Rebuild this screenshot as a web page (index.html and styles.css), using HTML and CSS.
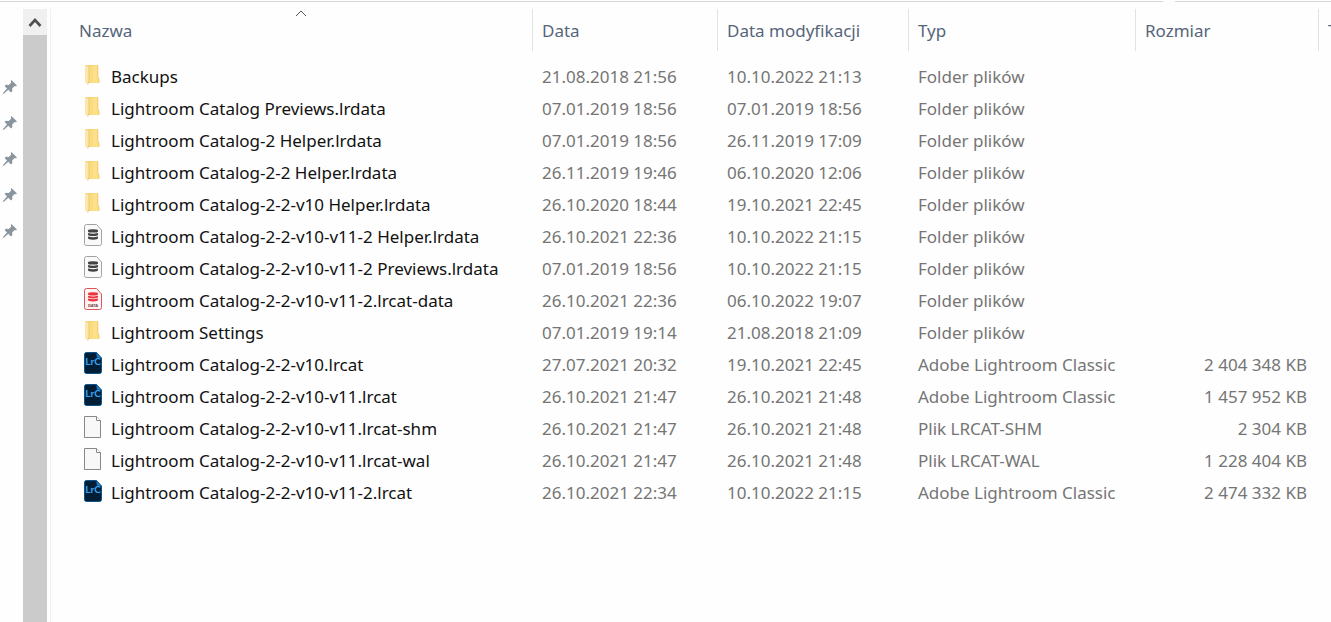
FILE: index.html
```html
<!DOCTYPE html>
<html lang="pl">
<head>
    <meta charset="UTF-8">
    <meta name="viewport" content="width=device-width, initial-scale=1.0">
    <title>Lightroom</title>
    <link rel="stylesheet" href="styles.css">
</head>
<body>

    <!-- Icons used in the lists -->
    <svg class="sprite" aria-hidden="true">
        <symbol id="pin" viewBox="0 0 16 16">
            <path d="M9.4 1 15 6.4 13.8 7.3 12.6 7.1 10.2 9.6 10.3 12.3 9 13.4 6.3 10.7 1.6 15 .8 14.3 5 9.5 2.6 7 3.8 5.8 6.8 6 9.2 3.6 8.7 2.1Z" fill="#8b959f"/>
        </symbol>
        <symbol id="folder" viewBox="0 0 18 22">
            <path d="M1 1H14V13.5L15 14.5V19H5L1 18Z" fill="#f2d27c"/>
            <path d="M5 3 10 1.5H14V13.5L15 14.5V19H5Z" fill="#fadb7e"/>
            <path d="M9 1.5H13.5V18.5H9Z" fill="#fde08b"/>
            <path d="M5 3 1 1V18L3.8 20.5 5 19Z" fill="#fbe7ae"/>
            <path d="M5 3V17L3.8 20.5" fill="none" stroke="#e9c566" stroke-width=".8"/>
            <path d="M13.8 1V13.5L15 14.5V19" fill="none" stroke="#ecc75f" stroke-width=".8"/>
        </symbol>
        <symbol id="database" viewBox="0 0 18 22">
            <path d="M2.5.5H12.5L17.5 6V19.5Q17.5 21.5 15.5 21.5H2.5Q.5 21.5.5 19.5V2.5Q.5.5 2.5.5Z" fill="#f9f9f9" stroke="#a2a2a2"/>
            <path d="M4 6.6Q4 5.2 9 5.2T14 6.6V7.4Q14 8.6 9 8.6T4 7.4ZM4 9Q9 10.6 14 9V10.7Q14 12.1 9 12.1T4 10.7ZM4 12.4Q9 14 14 12.4V14Q14 15.7 9 15.7T4 14Z" fill="#444"/>
        </symbol>
        <symbol id="data" viewBox="0 0 18 22">
            <path d="M2.5.5H12.5L17.5 6V19.5Q17.5 21.5 15.5 21.5H2.5Q.5 21.5.5 19.5V2.5Q.5.5 2.5.5Z" fill="#fff3f3" stroke="#d9545b"/>
            <path d="M4 5.6Q4 4.2 9 4.2T14 5.6V6.3Q14 7.5 9 7.5T4 6.3ZM4 7.7Q9 9.2 14 7.7V9.1Q14 10.4 9 10.4T4 9.1ZM4 10.6Q9 12.1 14 10.6V12Q14 13.4 9 13.4T4 12Z" fill="#ed343b"/>
            <text x="9" y="19" text-anchor="middle" font-size="4" font-weight="700" fill="#6b4446">DATA</text>
        </symbol>
        <symbol id="lrc" viewBox="0 0 18 22">
            <path d="M2.5.5H12.5L17.5 6V19.5Q17.5 21.5 15.5 21.5H2.5Q.5 21.5.5 19.5V2.5Q.5.5 2.5.5Z" fill="#001e36" stroke="#08548c"/>
            <path d="M12.5.5 17.5 6H14.5Q12.5 6 12.5 4Z" fill="#1b78b8"/>
            <text x="9" y="13" text-anchor="middle" font-family="Lato, sans-serif" font-size="10" font-weight="700" fill="#3ba4f2">LrC</text>
        </symbol>
        <symbol id="file" viewBox="0 0 18 22">
            <path d="M.5.5H12.5L16.5 4.5V21.5H.5Z" fill="#f8f8f8" stroke="#888"/>
            <path d="M12.5.5V4.5H16.5" fill="#fff" stroke="#888"/>
        </symbol>
    </svg>

    <div class="toolbar-edge">
        <span class="edge edge-path"></span>
        <span class="edge edge-search"></span>
    </div>

    <div class="explorer">
        <aside class="quick-access">
            <svg class="pin"><use href="#pin"/></svg>
            <svg class="pin"><use href="#pin"/></svg>
            <svg class="pin"><use href="#pin"/></svg>
            <svg class="pin"><use href="#pin"/></svg>
            <svg class="pin"><use href="#pin"/></svg>
        </aside>

        <div class="scrollbar">
            <button class="scroll-up" type="button" aria-label="W górę">
                <svg width="14" height="12" viewBox="0 0 14 12"><path d="M1.5 10 7 4 12.5 10" fill="none" stroke="#505050" stroke-width="2.6"/></svg>
            </button>
        </div>

        <main class="files">
            <table class="file-table">
                <colgroup>
                    <col>
                    <col class="col-date">
                    <col class="col-modified">
                    <col class="col-type">
                    <col class="col-size">
                    <col class="col-more">
                </colgroup>
                <thead>
                    <tr>
                        <th class="sorted" aria-sort="ascending">
                            <svg class="sort-arrow" width="12" height="7" viewBox="0 0 12 7"><path d="M1 6 6 1 11 6" fill="none" stroke="#555"/></svg>
                            <button type="button">Nazwa</button>
                        </th>
                        <th><button type="button">Data</button></th>
                        <th><button type="button">Data modyfikacji</button></th>
                        <th><button type="button">Typ</button></th>
                        <th><button type="button">Rozmiar</button></th>
                        <th><button type="button">T</button></th>
                    </tr>
                </thead>
                <tbody>
                    <tr>
                        <td><div class="name"><svg class="icon"><use href="#folder"/></svg>Backups</div></td>
                        <td>21.08.2018 21:56</td>
                        <td>10.10.2022 21:13</td>
                        <td>Folder plików</td>
                        <td class="size"></td>
                    </tr>
                    <tr>
                        <td><div class="name"><svg class="icon"><use href="#folder"/></svg>Lightroom Catalog Previews.lrdata</div></td>
                        <td>07.01.2019 18:56</td>
                        <td>07.01.2019 18:56</td>
                        <td>Folder plików</td>
                        <td class="size"></td>
                    </tr>
                    <tr>
                        <td><div class="name"><svg class="icon"><use href="#folder"/></svg>Lightroom Catalog-2 Helper.lrdata</div></td>
                        <td>07.01.2019 18:56</td>
                        <td>26.11.2019 17:09</td>
                        <td>Folder plików</td>
                        <td class="size"></td>
                    </tr>
                    <tr>
                        <td><div class="name"><svg class="icon"><use href="#folder"/></svg>Lightroom Catalog-2-2 Helper.lrdata</div></td>
                        <td>26.11.2019 19:46</td>
                        <td>06.10.2020 12:06</td>
                        <td>Folder plików</td>
                        <td class="size"></td>
                    </tr>
                    <tr>
                        <td><div class="name"><svg class="icon"><use href="#folder"/></svg>Lightroom Catalog-2-2-v10 Helper.lrdata</div></td>
                        <td>26.10.2020 18:44</td>
                        <td>19.10.2021 22:45</td>
                        <td>Folder plików</td>
                        <td class="size"></td>
                    </tr>
                    <tr>
                        <td><div class="name"><svg class="icon"><use href="#database"/></svg>Lightroom Catalog-2-2-v10-v11-2 Helper.lrdata</div></td>
                        <td>26.10.2021 22:36</td>
                        <td>10.10.2022 21:15</td>
                        <td>Folder plików</td>
                        <td class="size"></td>
                    </tr>
                    <tr>
                        <td><div class="name"><svg class="icon"><use href="#database"/></svg>Lightroom Catalog-2-2-v10-v11-2 Previews.lrdata</div></td>
                        <td>07.01.2019 18:56</td>
                        <td>10.10.2022 21:15</td>
                        <td>Folder plików</td>
                        <td class="size"></td>
                    </tr>
                    <tr>
                        <td><div class="name"><svg class="icon"><use href="#data"/></svg>Lightroom Catalog-2-2-v10-v11-2.lrcat-data</div></td>
                        <td>26.10.2021 22:36</td>
                        <td>06.10.2022 19:07</td>
                        <td>Folder plików</td>
                        <td class="size"></td>
                    </tr>
                    <tr>
                        <td><div class="name"><svg class="icon"><use href="#folder"/></svg>Lightroom Settings</div></td>
                        <td>07.01.2019 19:14</td>
                        <td>21.08.2018 21:09</td>
                        <td>Folder plików</td>
                        <td class="size"></td>
                    </tr>
                    <tr>
                        <td><div class="name"><svg class="icon"><use href="#lrc"/></svg>Lightroom Catalog-2-2-v10.lrcat</div></td>
                        <td>27.07.2021 20:32</td>
                        <td>19.10.2021 22:45</td>
                        <td>Adobe Lightroom Classic</td>
                        <td class="size">2 404 348 KB</td>
                    </tr>
                    <tr>
                        <td><div class="name"><svg class="icon"><use href="#lrc"/></svg>Lightroom Catalog-2-2-v10-v11.lrcat</div></td>
                        <td>26.10.2021 21:47</td>
                        <td>26.10.2021 21:48</td>
                        <td>Adobe Lightroom Classic</td>
                        <td class="size">1 457 952 KB</td>
                    </tr>
                    <tr>
                        <td><div class="name"><svg class="icon"><use href="#file"/></svg>Lightroom Catalog-2-2-v10-v11.lrcat-shm</div></td>
                        <td>26.10.2021 21:47</td>
                        <td>26.10.2021 21:48</td>
                        <td>Plik LRCAT-SHM</td>
                        <td class="size">2 304 KB</td>
                    </tr>
                    <tr>
                        <td><div class="name"><svg class="icon"><use href="#file"/></svg>Lightroom Catalog-2-2-v10-v11.lrcat-wal</div></td>
                        <td>26.10.2021 21:47</td>
                        <td>26.10.2021 21:48</td>
                        <td>Plik LRCAT-WAL</td>
                        <td class="size">1 228 404 KB</td>
                    </tr>
                    <tr>
                        <td><div class="name"><svg class="icon"><use href="#lrc"/></svg>Lightroom Catalog-2-2-v10-v11-2.lrcat</div></td>
                        <td>26.10.2021 22:34</td>
                        <td>10.10.2022 21:15</td>
                        <td>Adobe Lightroom Classic</td>
                        <td class="size">2 474 332 KB</td>
                    </tr>
                </tbody>
            </table>
        </main>
    </div>

</body>
</html>
```
FILE: styles.css
```css
body {
    margin: 0;
    min-height: 100vh;
    display: flex;
    flex-direction: column;
    overflow: hidden;
    background-color: #fefefe;
    color: #757575;
    font-family: "Noto Sans", "Open Sans", sans-serif;
    font-size: 17px;
}

.sprite {
    display: none;
}

/* Bottom edges of the address bar and the search box */
.toolbar-edge {
    display: flex;
    gap: 12px;
    height: 8px;
    padding-top: 1px;
}

.edge {
    height: 1px;
    background-color: #d5d7d7;
}

.edge-path {
    flex: 1;
}

.edge-search {
    width: 156px;
}

.explorer {
    flex: 1;
    display: flex;
}

.quick-access {
    width: 23px;
    padding-top: 70px;
    display: flex;
    flex-direction: column;
    gap: 20px;
}

.pin {
    width: 16px;
    height: 16px;
    margin-left: 2px;
}

.scrollbar {
    width: 24px;
    background-color: #cbcbcb;
}

.scroll-up {
    display: flex;
    align-items: center;
    justify-content: center;
    width: 100%;
    height: 26px;
    padding: 0;
    border: none;
    background-color: #f0f0f0;
}

.files {
    flex: 1;
    min-width: 0;
    margin-left: 3px;
    padding-left: 19px;
    border-left: 1px solid #f0f0f0;
}

.file-table {
    width: 100%;
    table-layout: fixed;
    border-collapse: separate;
    border-spacing: 0;
}

.col-date {
    width: 185px;
}

.col-modified {
    width: 191px;
}

.col-type {
    width: 227px;
}

.col-size {
    width: 183px;
}

.col-more {
    width: 12px;
}

th {
    position: relative;
    height: 42px;
    padding: 2px 0 0 9px;
    box-sizing: border-box;
    border-right: 1px solid #e0e2e4;
    text-align: left;
    overflow: hidden;
}

th:last-child {
    border-right: none;
}

th button {
    padding: 0;
    border: none;
    background: none;
    color: #56657a;
    font-family: inherit;
    font-size: 17px;
    line-height: 24px;
    white-space: nowrap;
}

.sort-arrow {
    position: absolute;
    top: 1px;
    left: 50%;
    transform: translateX(-50%);
}

tbody::before {
    content: "";
    display: block;
    height: 10px;
}

td {
    height: 32px;
    padding: 0 0 0 9px;
    line-height: 24px;
    white-space: nowrap;
}

td:first-child {
    padding-left: 14px;
}

td.size {
    padding-right: 12px;
    text-align: right;
}

.name {
    display: flex;
    align-items: center;
    gap: 9px;
    color: #111;
}

.icon {
    width: 18px;
    height: 22px;
    margin-bottom: 4px;
    flex-shrink: 0;
}
```
